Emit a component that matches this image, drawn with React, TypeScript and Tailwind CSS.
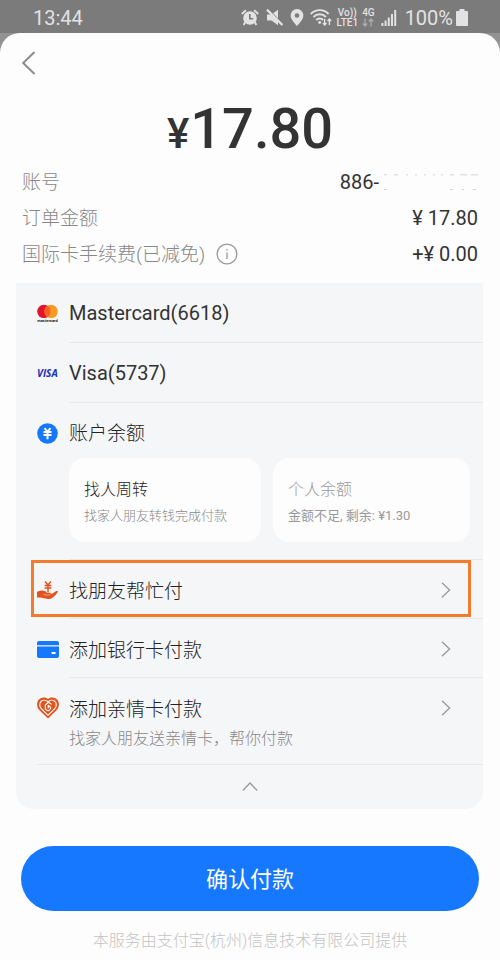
import { useState } from "react";
import type { ReactNode } from "react";

function ChevronRight() {
  return (
    <svg className="h-4 w-[10px] shrink-0" viewBox="0 0 10 16" fill="none" stroke="#999999" strokeWidth="1.3" aria-hidden="true">
      <path d="M1 0.8 8.6 8 1 15.2" />
    </svg>
  );
}

function MastercardIcon() {
  return (
    <svg className="h-[21px] w-[21px]" viewBox="0 0 21 21" aria-hidden="true">
      <circle cx="6.9" cy="8.4" r="6.7" fill="#e0142b" />
      <circle cx="14.1" cy="8.4" r="6.7" fill="#f79a24" />
      <path d="M10.5 2.75a6.7 6.7 0 0 1 0 11.3 6.7 6.7 0 0 1 0-11.3z" fill="#f8601f" />
      <text x="10.5" y="19" fontSize="4" fontWeight="700" textAnchor="middle" fill="#222222">
        mastercard
      </text>
    </svg>
  );
}

function VisaIcon() {
  return (
    <span className="font-['Open_Sans',sans-serif] text-[10px] font-bold italic leading-none text-[#1a2fb5]">
      VISA
    </span>
  );
}

function BalanceIcon() {
  return (
    <svg className="h-[21px] w-[21px]" viewBox="0 0 21 21" aria-hidden="true">
      <circle cx="10.5" cy="10.5" r="10.3" fill="#1677ff" />
      <path d="M7.5 5.2 10.5 8.6 13.5 5.2M6.5 9h8M6.5 12h8M10.5 8.6v7.6" fill="none" stroke="#ffffff" strokeWidth="2" />
    </svg>
  );
}

function HandIcon() {
  return (
    <svg className="h-[21px] w-[21px]" viewBox="0 0 21 21" aria-hidden="true">
      <path
        d="M0 11.8 4 10.6c1.3-.4 2.5-.2 3.7.3l3 1.3c1 .4 2.3.2 3 .8.5.5.1 1-.5 1l1.800-.2c1-.3 1.7-1.200 2.600-1.800 1-.7 2.400-1.500 3-.9.5.5 0 1.200-.5 1.800-1.700 2.300-3.700 4.300-6 5.600-1 .6-2.300.7-3.500.4L5.800 17.900c-.9-.3-1.800-.5-2.700-.5H0z"
        fill="#e2541f"
      />
      <path d="M11 10v2.8" stroke="#f5f6f8" strokeWidth="3.2" />
      <path d="M8 1.5 11 5 14 1.5M7.6 5.4h6.8M7.6 8h6.8M11 5v7.6" fill="none" stroke="#e2541f" strokeWidth="1.5" />
      <path d="M6.5 14.6c2 .6 4.5.7 7 0" fill="none" stroke="#f5f6f8" strokeWidth="0.5" />
    </svg>
  );
}

function BankCardIcon() {
  return (
    <svg className="h-[17px] w-[22px]" viewBox="0 0 22 17" aria-hidden="true">
      <path d="M2 0h18a2 2 0 0 1 2 2v2.2H0V2a2 2 0 0 1 2-2z" fill="#1677ff" />
      <path d="M0 5.4h22V15a2 2 0 0 1-2 2H2a2 2 0 0 1-2-2z" fill="#1677ff" />
      <rect x="14.6" y="11" width="4" height="2" rx="0.4" fill="#ffffff" />
    </svg>
  );
}

function FamilyCardIcon() {
  return (
    <svg className="h-[22px] w-[22px]" viewBox="0 0 22 22" aria-hidden="true">
      <path
        d="M11 21.6 2.2 12.9C-.6 10-.5 5.1 1.9 2.6 4.3 0 8.3-.1 11 2c2.7-2.1 6.7-2 9.1.6 2.4 2.5 2.5 7.4-.3 10.3z"
        fill="#e2541f"
      />
      <path
        d="M11 18.3 4.1 11.4C2.3 9.5 2.3 6.3 4 4.5 5.9 2.7 9 2.9 11 4.9c2-2 5.1-2.200 7-.4 1.700 1.800 1.700 5-.1 6.900z"
        fill="none"
        stroke="#ffffff"
        strokeWidth="1.1"
      />
      <path
        d="M14.6 7.4 11.6 5.3 8.3 8v3.6c.5 1.6 2.2 2.5 3.6 1.800 1.200-.5 1.900-1.700 1.800-3L11.200 8.300v3.200"
        fill="none"
        stroke="#ffffff"
        strokeWidth="1.1"
        strokeLinejoin="round"
      />
    </svg>
  );
}

function StatusBar() {
  return (
    <div className="flex h-[33px] items-center bg-[#7b7b7b] pl-[33px] pr-8 pt-[2px] text-xl leading-6 text-[#e2e2e2]">
      <span>13:44</span>
      <div className="ml-auto flex items-center">
        <svg className="mr-[7px] h-[17px] w-[18px]" viewBox="0 0 18 17" aria-hidden="true">
          <circle cx="9" cy="9" r="6.8" fill="#e2e2e2" />
          <path d="M4.3 13 2.6 16M13.7 13l1.700 3M.8 5 4.800 1.200M17.200 5 13.200 1.200" fill="none" stroke="#e2e2e2" strokeWidth="1.9" />
          <path d="M8.8 5v4.7h3.4" fill="none" stroke="#7b7b7b" strokeWidth="1.6" />
        </svg>
        <svg className="mr-[7px] h-[17px] w-[17px]" viewBox="0 0 17 17" aria-hidden="true">
          <path d="M1 5.5h4.5L12 .8v15.400l-6.500-4.700H1z" fill="#e2e2e2" />
          <path d="M1.500 -.4 17 15" stroke="#7b7b7b" strokeWidth="1.2" />
          <path d="M1 .6 16.4 16" stroke="#e2e2e2" strokeWidth="2.3" />
        </svg>
        <svg className="mr-[6px] h-[17px] w-[14px]" viewBox="0 0 14 17" aria-hidden="true">
          <path d="M7 0a6.4 6.4 0 0 0-6.4 6.5C.6 10.7 7 17 7 17s6.400-6.300 6.400-10.500A6.400 6.400 0 0 0 7 0zm0 4.200a2.300 2.300 0 1 1 0 4.600 2.300 2.300 0 0 1 0-4.600z" fill="#e2e2e2" fillRule="evenodd" />
        </svg>
        <svg className="mr-[5px] h-[17px] w-[22px]" viewBox="0 0 22 17" fill="none" stroke="#e2e2e2" strokeWidth="1.9" aria-hidden="true">
          <path d="M.8 5C5.600-.2 14-.2 18.600 5M3.500 8C7 4.300 12.400 4.300 15.900 8M6.200 11c2-2 5-2 7 0" />
          <circle cx="9.7" cy="13.5" r="1.4" fill="#e2e2e2" stroke="none" />
          <path d="M14.7 10v6M12.9 14l1.800 2 1.800-2M19.400 16v-6M17.600 12l1.800-2 1.800 2" strokeWidth="1.4" />
        </svg>
        <span className="mr-1 flex flex-col items-center text-[10px] font-medium leading-[10px]">
          <span>Vo))</span>
          <span>LTE1</span>
        </span>
        <span className="mr-[6px] flex flex-col items-center text-[10px] font-medium leading-[10px]">
          <span>4G</span>
          <svg className="h-[9px] w-3" viewBox="0 0 12 9" fill="none" stroke="#adadad" strokeWidth="1.3" aria-hidden="true">
            <path d="M3 .5v7.5M.8 5.5 3 8l2.200-2.500M9 8.500V1M6.800 3.500 9 1l2.200 2.500" />
          </svg>
        </span>
        <svg className="mr-2 h-[17px] w-4" viewBox="0 0 16 17" fill="#e2e2e2" aria-hidden="true">
          <path d="M.4 14h2v3h-2zM3.6 11.5h2V17h-2zM6.8 8.5h2V17h-2zM10 5h2v12h-2zM13.2 1h2v16h-2z" />
        </svg>
        <span className="mr-[3px]">100%</span>
        <svg className="h-[17px] w-3" viewBox="0 0 12 17" fill="#e2e2e2" aria-hidden="true">
          <path d="M3.5 0h5v2H11a1 1 0 0 1 1 1v13a1 1 0 0 1-1 1H1a1 1 0 0 1-1-1V3a1 1 0 0 1 1-1h2.500z" />
        </svg>
      </div>
    </div>
  );
}

// Number with everything after the prefix blanked out
function MaskedAccount() {
  return (
    <span className="flex items-center">
      886-
      <svg className="h-[17px] w-[99px]" viewBox="0 0 99 17" fill="none" stroke="#d4d4d4" aria-hidden="true">
        <path d="M5 .8h3M15 .8h4M27 .8h2M36 .8h2M45 .8h2M54 .8h2M62 .8h2M71 .8h4M81 .8h7M92 .8h7" />
        <path d="M5 15.5h3M71 15.5h3M83 15.5h2M94 15.5h3" />
      </svg>
    </span>
  );
}

function DetailRow({ label, children }: { label: ReactNode; children: ReactNode }) {
  return (
    <div className="flex h-9 items-center justify-between">
      <dt className="flex items-center text-[19px] font-light text-[#888888]">{label}</dt>
      <dd className="text-xl text-[#333333]">{children}</dd>
    </div>
  );
}

function CardRow({ icon, title }: { icon: ReactNode; title: string }) {
  return (
    <li className="ml-[21px]">
      <button type="button" className="flex w-full items-center text-left">
        <span className="flex w-8 shrink-0 items-center">{icon}</span>
        <span className="flex-1 border-b border-[#e8e9eb] pb-[15px] pt-4 text-xl leading-7 text-[#333333]">{title}</span>
      </button>
    </li>
  );
}

interface LinkRowProps {
  icon: ReactNode;
  title: string;
  note?: string;
  highlighted?: boolean;
}

function LinkRow({ icon, title, note, highlighted }: LinkRowProps) {
  return (
    <li className={note ? "ml-[21px] border-b border-[#e8e9eb]" : "relative ml-[21px]"}>
      <button type="button" className="flex w-full items-stretch text-left">
        <span className="mt-4 flex h-7 w-8 shrink-0 items-center">{icon}</span>
        <span className={note ? "flex flex-1 pb-3 pt-4" : "flex flex-1 border-b border-[#e8e9eb] pb-[10px] pt-4"}>
          <span className="flex-1">
            <span className="block text-[19px] font-light leading-8 text-[#222222]">{title}</span>
            {note && <span className="block text-base font-light leading-[26px] text-[#888888]">{note}</span>}
          </span>
          <span className="mr-8 flex h-7 items-center">
            <ChevronRight />
          </span>
        </span>
      </button>
      {highlighted && (
        <span className="pointer-events-none absolute -left-[6px] bottom-[2px] right-3 top-0 border-3 border-[#f47b2c]" />
      )}
    </li>
  );
}

export default function App() {
  const [expanded, setExpanded] = useState(true);

  return (
    <div className="flex min-h-screen flex-col bg-[#929292] font-[Roboto,'Noto_Sans_CJK_SC',sans-serif]">
      <StatusBar />
      <main className="flex-1 rounded-t-[20px] bg-[#fdfdfd]">
        <header className="flex h-[60px] items-center px-[21px]">
          <button type="button" aria-label="返回">
            <svg className="h-6 w-[15px]" viewBox="0 0 15 24" fill="none" stroke="#8c8c8c" strokeWidth="2" aria-hidden="true">
              <path d="M13.5 1 2.2 12l11.3 11" />
            </svg>
          </button>
        </header>

        <h1 className="flex h-[71px] items-baseline justify-center gap-px font-medium text-[#333333]">
          <span className="text-[42px] leading-none">¥</span>
          <span className="text-[56px] leading-[72px]">17.80</span>
        </h1>

        <dl className="px-[22px] pb-[11px]">
          <DetailRow label={<span className="pt-[3px]">账号</span>}>
            <MaskedAccount />
          </DetailRow>
          <DetailRow label={<span className="pt-[3px]">订单金额</span>}>¥ 17.80</DetailRow>
          <DetailRow
            label={
              <>
                <span className="pt-[3px]">国际卡手续费(已减免)</span>
                <button type="button" aria-label="手续费说明" className="ml-[11px]">
                  <svg className="h-[22px] w-[22px]" viewBox="0 0 22 22" fill="none" stroke="#999999" strokeWidth="1.3" aria-hidden="true">
                    <circle cx="11" cy="11" r="9.9" />
                    <path d="M11 9.5v6.5M11 6v1.6" />
                  </svg>
                </button>
              </>
            }
          >
            +¥ 0.00
          </DetailRow>
        </dl>

        <section className="ml-4 mr-[17px] rounded-b-[18px] bg-[#f5f6f8]">
          <ul>
            <CardRow icon={<MastercardIcon />} title="Mastercard(6618)" />
            <CardRow icon={<VisaIcon />} title="Visa(5737)" />

            <li className="ml-[21px] flex">
              <span className="mt-4 flex h-7 w-8 shrink-0 items-center">
                <BalanceIcon />
              </span>
              <div className="flex-1 border-b border-[#e8e9eb] pb-[17px] pt-4">
                <h2 className="text-[19px] font-light leading-[30px] text-[#222222]">账户余额</h2>
                <div className="mr-[13px] mt-[9px] grid grid-cols-[192fr_197fr] gap-3">
                  <button type="button" className="rounded-2xl bg-[#fdfdfd] px-[15px] pb-[14px] pt-5 text-left">
                    <span className="block text-base font-light leading-6 text-[#222222]">找人周转</span>
                    <span className="mt-[2px] block text-[13px] font-light leading-6 text-[#888888]">找家人朋友转钱完成付款</span>
                  </button>
                  <button type="button" disabled className="rounded-2xl bg-[#fdfdfd] px-[15px] pb-[14px] pt-5 text-left">
                    <span className="block text-base font-light leading-6 text-[#999999]">个人余额</span>
                    <span className="mt-[2px] block text-[13px] leading-6 text-[#999999]">金额不足, 剩余: ¥1.30</span>
                  </button>
                </div>
              </div>
            </li>

            {expanded && (
              <>
                <LinkRow icon={<HandIcon />} title="找朋友帮忙付" highlighted />
                <LinkRow icon={<BankCardIcon />} title="添加银行卡付款" />
                <LinkRow icon={<FamilyCardIcon />} title="添加亲情卡付款" note="找家人朋友送亲情卡，帮你付款" />
              </>
            )}
          </ul>
          <button
            type="button"
            aria-label={expanded ? "收起" : "展开"}
            onClick={() => setExpanded(!expanded)}
            className="flex h-11 w-full items-center justify-center pb-[2px]"
          >
            <svg className="h-[9px] w-4" viewBox="0 0 16 9" fill="none" stroke="#999999" strokeWidth="1.3" aria-hidden="true">
              <path d="M.8 8.5 8 1l7.2 7.5" />
            </svg>
          </button>
        </section>

        <footer className="px-[21px] pt-[37px] text-center">
          <button type="button" className="h-[65px] w-full rounded-full bg-[#1677ff] pt-[2px] text-[22px] text-white">
            确认付款
          </button>
          <p className="mt-[18px] text-base font-light leading-6 text-[#c4c4c4]">本服务由支付宝(杭州)信息技术有限公司提供</p>
        </footer>
      </main>
    </div>
  );
}
